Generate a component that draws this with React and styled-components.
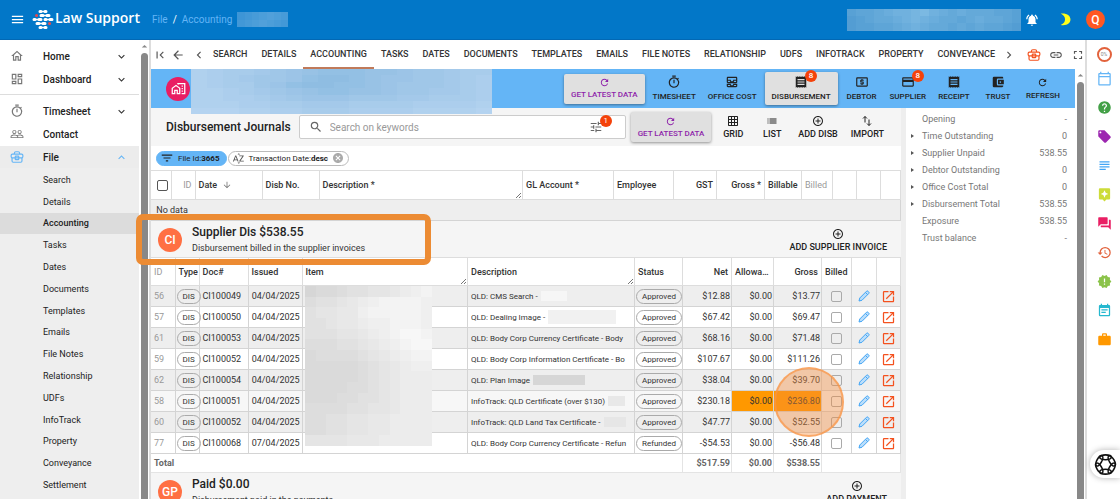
import React from "react";
import styled, { createGlobalStyle } from "styled-components";
import {
  MdAccountBalanceWallet, MdAddCircleOutline, MdArrowBack, MdArrowDownward, MdArrowDropUp, MdAssistant,
  MdCancel, MdChevronLeft, MdChevronRight, MdEventNote, MdFilterList, MdFirstPage, MdFullscreen, MdGridOn,
  MdHelp, MdHistory, MdKeyboardArrowDown, MdKeyboardArrowUp, MdLaunch, MdLink, MdList, MdLocalAtm,
  MdLocalOffer, MdMenu, MdNewReleases, MdNotificationsActive, MdOutlineAllInbox, MdOutlineCalendarToday,
  MdOutlineDashboard, MdOutlineHome, MdOutlineHomeWork, MdOutlineTimer, MdPayment,
  MdPeopleOutline, MdQuestionAnswer, MdReceipt, MdRefresh, MdSearch, MdSortByAlpha, MdSubject, MdTune, MdWork
} from "react-icons/md";

const GlobalStyle = createGlobalStyle`
  * { box-sizing: border-box; }
  body {
    margin: 0;
    font-family: Roboto, "Liberation Sans", sans-serif;
    font-size: 9px;
    color: #222;
    background: #fff;
  }
  button, input { font: inherit; color: inherit; }
  button { border: 0; padding: 0; background: none; cursor: pointer; }
  a { color: inherit; text-decoration: none; }
  ul { list-style: none; margin: 0; padding: 0; }
  h1, h2, p { margin: 0; font-weight: 500; }
  svg { display: block; flex: none; }
`;

const Shell = styled.div`
  height: 100vh;
  display: flex;
  flex-direction: column;
  overflow: hidden;
`;

const TopBar = styled.header`
  flex: none;
  height: 40px;
  display: flex;
  align-items: center;
  padding: 0 15px 0 10px;
  background: #0277c8;
  border-bottom: 1px solid #0268b4;
  color: #fff;
`;

const Brand = styled.a`
  display: flex;
  align-items: center;
  gap: 1px;
  margin-left: 7px;
  font: 600 14px/18px "Open Sans", "Noto Sans", sans-serif;
  span { padding-bottom: 4px; }
`;

const Crumbs = styled.nav`
  display: flex;
  align-items: center;
  gap: 5px;
  margin-left: 12px;
  font-size: 10px;
  a { color: #64b5f6; }
`;

const TopRight = styled.div`
  margin-left: auto;
  display: flex;
  align-items: center;
  button:nth-of-type(1) { margin-left: 4px; }
  button:nth-of-type(2) { margin: 0 15px 0 19px; }
`;

const Avatar = styled.span`
  flex: none;
  display: flex;
  align-items: center;
  justify-content: center;
  width: ${p => p.$size}px;
  height: ${p => p.$size}px;
  border-radius: 50%;
  background: ${p => p.$color || "#ff7043"};
  color: #fff;
  font-size: 12px;
  font-weight: 500;
`;

const Body = styled.div`
  flex: 1;
  min-height: 0;
  display: flex;
`;

const Sidebar = styled.nav`
  flex: none;
  width: 139px;
  display: flex;
  flex-direction: column;
  padding-top: 5px;
`;

const NavItem = styled.a`
  flex: none;
  display: grid;
  grid-template-columns: 33px 1fr 13px;
  align-items: center;
  height: 22px;
  margin-bottom: ${p => (p.$open ? 0 : 1)}px;
  padding: 0 11px 0 10px;
  font-size: 10px;
  font-weight: 500;
  background: ${p => (p.$open ? "#ececec" : "#fff")};
  color: #222;
  svg:first-child { color: ${p => (p.$open ? "#64b5f6" : "#777")}; }
  svg:last-child { color: ${p => (p.$open ? "#64b5f6" : "#333")}; }
`;

const Divider = styled.hr`
  width: 100%;
  margin: 3px 0 5px;
  border: 0;
  border-top: 1px solid #ddd;
`;

const SubMenu = styled.ul`
  flex: 1;
  display: flex;
  flex-direction: column;
  padding: 1px 0 3px;
  background: #eee;
`;

const SubItem = styled.li`
  flex: 1;
  display: flex;
  align-items: center;
  padding-left: 43px;
  background: ${p => (p.$active ? "#dcdcdc" : "none")};
  font-weight: ${p => (p.$active ? 500 : 400)};
`;

const ScrollTrack = styled.div`
  flex: none;
  width: ${p => p.$width}px;
  display: flex;
  flex-direction: column;
  align-items: center;
  background: #fff;
  border-right: 2px solid #ddd;
  color: #888;
  svg { margin: 0 -2px; }
`;

const ScrollThumb = styled.div`
  flex: 1;
  width: 7px;
  margin-bottom: -8px;
  border-radius: 4px;
  background: #888;
`;

const Main = styled.main`
  flex: 1;
  min-width: 0;
  display: flex;
  flex-direction: column;
`;

const TabBar = styled.nav`
  flex: none;
  height: 29px;
  display: flex;
  align-items: center;
  padding: 0 0 0 2px;
  border-right: 2px solid #ddd;
  color: #555;
`;

const BackTools = styled.div`
  display: flex;
  gap: 4px;
  margin-right: 7px;
`;

const Tabs = styled.div`
  flex: 1;
  height: 100%;
  display: flex;
`;

const Tab = styled.a`
  flex: 1 1 auto;
  display: flex;
  align-items: center;
  justify-content: center;
  white-space: nowrap;
  font-weight: 500;
  color: #333;
  border-bottom: 2px solid ${p => (p.$active ? "#c07a5a" : "transparent")};
`;

const TabTools = styled.div`
  display: flex;
  align-items: center;
  gap: 8px;
  margin-left: 11px;
`;

const Scroller = styled.div`
  flex: 1;
  min-height: 0;
  display: flex;
`;

const Page = styled.div`
  flex: 1;
  min-width: 0;
  display: flex;
  flex-direction: column;
`;

const FileBar = styled.div`
  position: relative;
  z-index: 1;
  flex: none;
  height: 39px;
  display: flex;
  align-items: center;
  padding: 0 9px 0 15px;
  background: #64b5f6;
`;

const FileName = styled.div`
  align-self: flex-start;
  margin-left: 1px;
  flex: 0 1 301px;
  height: 39px;
`;

const Actions = styled.div`
  display: flex;
  align-items: center;
  margin-left: auto;
`;

const Action = styled.button`
  display: flex;
  flex-direction: column;
  align-items: center;
  justify-content: center;
  gap: ${p => (p.$latest ? 1 : 2)}px;
  min-width: ${p => (p.$small ? 44 : 38)}px;
  height: ${p => (p.$latest ? 30 : 33)}px;
  margin: 0 ${p => (p.$raised ? 2 : 0)}px;
  padding: 0 ${p => (p.$raised ? 7 : 6)}px;
  white-space: nowrap;
  font-size: ${p => (p.$small ? 8 : 9)}px;
  font-weight: 500;
  line-height: 11px;
  border-radius: 2px;
  color: ${p => (p.$latest ? "#8e24aa" : "#222")};
  background: ${p => (p.$raised ? "#e0e0e0" : "none")};
  box-shadow: ${p => (p.$raised ? "0 1px 3px rgba(0, 0, 0, 0.4)" : "none")};
`;

const IconSlot = styled.span`
  position: relative;
`;

const Badge = styled.span`
  position: absolute;
  top: -5px;
  left: 11px;
  width: 12px;
  height: 12px;
  border-radius: 50%;
  background: #f4420a;
  color: #fff;
  font-size: 8px;
  line-height: 12px;
  text-align: center;
`;

const Columns = styled.div`
  flex: 1;
  min-height: 0;
  display: flex;
`;

const Journal = styled.section`
  flex: 1;
  min-width: 0;
`;

const JournalHead = styled.div`
  height: 38px;
  display: flex;
  align-items: center;
  gap: 1px;
  padding: 0 11px 0 15px;
  background: #f5f5f5;
  h1 { font-size: 12px; margin-right: 7px; white-space: nowrap; }
`;

const SearchBox = styled.label`
  flex: 1;
  min-width: 0;
  height: 24px;
  display: flex;
  align-items: center;
  margin-right: 2px;
  padding: 0 22px 0 9px;
  background: #fff;
  border: 1px solid #ccc;
  border-radius: 2px;
  color: #666;
  input {
    flex: 1;
    min-width: 0;
    margin-left: 7px;
    padding: 0;
    border: 0;
    outline: 0;
    background: none;
    font-size: 10px;
  }
  input::placeholder { color: #999; opacity: 1; }
`;

const Chips = styled.div`
  height: 24px;
  display: flex;
  align-items: center;
  gap: 1px;
  padding-left: 5px;
`;

const Chip = styled.span`
  display: flex;
  align-items: center;
  gap: 4px;
  height: 15px;
  padding: 0 ${p => (p.$filled ? 6 : 4)}px 0 3px;
  border: 1px solid ${p => (p.$filled ? "#64b5f6" : "#bbb")};
  border-radius: 8px;
  background: ${p => (p.$filled ? "#64b5f6" : "#fff")};
  font-size: 8px;
  b { font-weight: 700; }
`;

const Table = styled.table`
  width: 100%;
  table-layout: fixed;
  border-collapse: collapse;
  th {
    position: relative;
    height: ${p => p.$head}px;
    border: solid #ddd;
    border-width: 1px 1px 1px 0;
    background: #fff;
    white-space: nowrap;
    overflow: hidden;
    text-overflow: ellipsis;
  }
  td {
    height: 21px;
    padding: 0 3px;
    border: solid #d4d4d4;
    border-width: 1px 1px 1px 0;
    white-space: nowrap;
  }
  tfoot td {
    height: 19px;
    background: #fff;
    border-color: #e4e4e4;
    font-weight: 700;
    color: #666;
  }
`;

const Row = styled.tr`
  background: ${p => p.$tone};
`;

const HeadCell = styled.th`
  padding: 0 ${p => (p.$align ? 3 : 0)}px 0 3px;
  text-align: ${p => p.$align || "left"};
  color: ${p => (p.$muted ? "#999" : "#333")};
  font-weight: ${p => (p.$muted ? 400 : 500)};
  svg { display: inline-block; vertical-align: middle; }
`;

const Cell = styled.td`
  position: relative;
  text-align: ${p => p.$align || "left"};
  && { padding: 0 ${p => (p.$tight ? 1 : 3)}px; }
  color: ${p => (p.$muted ? "#999" : "#333")};
  background: ${p => (p.$warn ? "#ff9800" : "none")};
`;

const Clip = styled.div`
  display: flex;
  align-items: center;
  gap: 3px;
  overflow: hidden;
  font-size: 8px;
`;

const Smudge = styled.span`
  flex: none;
  width: ${p => p.$w}px;
  height: ${p => p.$h}px;
  background: ${p => p.$color};
`;

const Pill = styled.span`
  display: inline-block;
  height: 15px;
  padding: 0 5px;
  border: 1px solid #aaa;
  border-radius: 8px;
  font-size: 8px;
  line-height: 13px;
  color: #333;
  vertical-align: middle;
`;

const Check = styled.input.attrs({ type: "checkbox" })`
  appearance: none;
  display: block;
  width: ${p => p.$size}px;
  height: ${p => p.$size}px;
  margin: 0 auto;
  border: 1px solid ${p => p.$color};
  border-radius: 2px;
`;

const IconButton = styled.button`
  display: block;
  margin: ${p => (p.$cell ? "0 auto" : 0)};
  color: ${p => p.$color || "inherit"};
`;

const Grip = styled.svg`
  position: absolute;
  right: 0;
  bottom: 0;
`;

const Group = styled.div`
  position: relative;
  height: 36px;
  display: flex;
  align-items: center;
  gap: 10px;
  padding: 2px 8px 0 7px;
  background: #f5f5f5;
  h2 { font-size: 12px; line-height: 17px; }
  p { font-size: 9px; line-height: 15px; font-weight: 400; color: #333; }
  > button { margin-left: auto; }
`;

const Callout = styled.div`
  position: absolute;
  z-index: 5;
  left: -15px;
  top: -7px;
  width: 295px;
  height: 51px;
  border: 6px solid #ec8b33;
  border-radius: 7px;
  pointer-events: none;
`;

const Spotlight = styled.span`
  position: absolute;
  z-index: 4;
  left: 0;
  top: -24px;
  width: 70px;
  height: 70px;
  border: 2px solid rgba(250, 150, 70, 0.7);
  border-radius: 50%;
  background: rgba(245, 140, 60, 0.4);
  pointer-events: none;
`;

const Overlap = styled.div`
  position: relative;
`;

const ItemCover = styled.div`
  position: absolute;
  left: 154px;
  top: 29px;
  width: 127px;
  height: 160px;
`;

const MosaicGrid = styled.div`
  display: grid;
  grid-template-columns: repeat(${p => p.$cols}, 1fr);
  width: ${p => (p.$w ? `${p.$w}px` : "100%")};
  height: ${p => (p.$h ? `${p.$h}px` : "100%")};
`;

const Summary = styled.aside`
  flex: none;
  width: 174px;
  padding: 2px 8px 0 5px;
  border-left: 5px solid #eee;
  color: #777;
`;

const SummaryRow = styled.div`
  display: grid;
  grid-template-columns: 11px 1fr auto;
  align-items: center;
  height: 17px;
`;

const Caret = styled.i`
  border: 2px solid transparent;
  border-left: 3px solid #555;
  width: 0;
  visibility: ${p => (p.$shown ? "visible" : "hidden")};
`;

const Rail = styled.aside`
  flex: none;
  width: 33px;
  display: flex;
  flex-direction: column;
  align-items: center;
  gap: 14px;
  padding: 7px 0 0 1px;
  button:first-child { margin-bottom: -5px; }
`;

const Progress = styled.span`
  display: block;
  width: 15px;
  height: 15px;
  border: 2px solid #e2623c;
  border-radius: 50%;
  color: #888;
  font-size: 5px;
  line-height: 11px;
  text-align: center;
`;

const Assistant = styled.button`
  position: fixed;
  right: 0;
  bottom: 21px;
  width: 30px;
  height: 28px;
  display: flex;
  align-items: center;
  justify-content: center;
  border-radius: 14px 0 0 14px;
  background: #fff;
  box-shadow: 0 0 6px rgba(0, 0, 0, 0.3);
`;

// each digit is the position of the cell between the two colours, 0 to 9
const Mosaic = ({ rows, from, to, w, h }) => (
  <MosaicGrid $cols={rows[0].length} $w={w} $h={h}>
    {rows.join("").split("").map((d, i) => (
      <span key={i} style={{ background: `color-mix(in srgb, ${to} ${Number(d) * 11}%, ${from})` }} />
    ))}
  </MosaicGrid>
);

const nameRows = [
  "1233456788877655433",
  "1234556899876655432",
  "1233568998876555432",
  "1123456788776554432",
  "1122345666555443332",
  "1112233444333322221",
  "0001122333222211110"
];

const itemRows = [
  "011233445678", "233456788887", "344557888887", "334556778887", "333445678998",
  "222334567899", "122223456788", "111112345677", "111112345666", "111122345666",
  "111223345666", "222233445666", "223344556666", "223344556666", "444455566666"
];

const Logo = () => (
  <svg width="22" height="22" viewBox="0 0 22 22" fill="none" strokeWidth="3" strokeLinecap="round">
    <path stroke="#fff" d="M8 2.500h1M13 2.500h1M9 6.500h2M15 6.500h2M2 10.500h1M7 10.500h2M13 10.500h1M18 10.500h2M5 14.500h2M11 14.500h2M8 18.500h1M13 18.500h1" />
    <path stroke="#fff" strokeWidth="1.600" d="M8 2.500h6M9 6.500h8M2 10.500h7M13 10.500h7M5 14.500h8M8 18.500h6" />
    <path stroke="#e5484d" d="M4.500 6.500h.1M17.500 14.500h.1" />
  </svg>
);

const Briefcase = ({ size }) => (
  <svg width={size} height={size} viewBox="0 0 24 24" fill="none" stroke="currentColor" strokeWidth="2">
    <path d="M7.500 7V5.500Q7.500 3 10 3h4q2.500 0 2.500 2.500V7" />
    <rect x="2" y="7" width="20" height="6.500" rx="2" />
    <path d="M3.500 13.500V19q0 2 2 2h13q2 0 2-2v-5.500" />
    <rect x="9" y="10.500" width="6" height="6" rx="1" />
  </svg>
);

const Pencil = () => (
  <svg width="12" height="12" viewBox="0 0 24 24" fill="#bbdefb" stroke="#42a5f5" strokeWidth="2">
    <path d="M2 22l1.500-6L17 2.500q1.500-1.500 3 0l1.500 1.500q1.500 1.500 0 3L8 20.500zM15 5l4.500 4.500" />
  </svg>
);

const Moon = () => (
  <svg width="13" height="13" viewBox="0 0 24 24" fill="#ffff1a">
    <path d="M5 1c12-1 18 4 18 11S16 24 5 22c6-3 8-6 8-10.500S10 4 5 1z" />
  </svg>
);

const ImportArrows = () => (
  <svg width="12" height="12" viewBox="0 0 24 24" fill="none" stroke="currentColor" strokeWidth="2">
    <path d="M8 15V3M4 7l4-4 4 4M16 9v12M12 17l4 4 4-4" />
  </svg>
);

const Knot = () => (
  <svg width="23" height="23" viewBox="0 0 24 24" fill="none" stroke="#111" strokeWidth="1.700">
    {[0, 60, 120, 180, 240, 300].map(a => (
      <ellipse key={a} cx="12" cy="4.500" rx="6" ry="2.500" transform={`rotate(${a} 12 12)`} />
    ))}
  </svg>
);

const ResizeGrip = () => (
  <Grip width="7" height="7" viewBox="0 0 7 7" stroke="#777">
    <path d="M1 6l5-5M4 6l2-2" />
  </Grip>
);

const subItems = [
  "Search", "Details", "Accounting", "Tasks", "Dates", "Documents", "Templates", "Emails",
  "File Notes", "Relationship", "UDFs", "InfoTrack", "Property", "Conveyance", "Settlement"
];

const tabs = [
  "SEARCH", "DETAILS", "ACCOUNTING", "TASKS", "DATES", "DOCUMENTS", "TEMPLATES", "EMAILS",
  "FILE NOTES", "RELATIONSHIP", "UDFS", "INFOTRACK", "PROPERTY", "CONVEYANCE"
];

const fileActions = [
  { label: "TIMESHEET", Icon: MdOutlineTimer },
  { label: "OFFICE COST", Icon: MdOutlineAllInbox },
  { label: "DISBURSEMENT", Icon: MdReceipt, badge: 8, raised: true },
  { label: "DEBTOR", Icon: MdLocalAtm },
  { label: "SUPPLIER", Icon: MdPayment, badge: 8 },
  { label: "RECEIPT", Icon: MdReceipt },
  { label: "TRUST", Icon: MdAccountBalanceWallet }
];

const invoices = [
  { id: 56, doc: "CI100049", date: "04/04/2025", text: "QLD: CMS Search -", smudge: [26, 10, "#f6f6f6"], net: "$12.88", gross: "$13.77", tone: "#eee" },
  { id: 57, doc: "CI100050", date: "04/04/2025", text: "QLD: Dealing Image -", smudge: [68, 14, "#f1f1f1"], net: "$67.42", gross: "$69.47", tone: "#fff" },
  { id: 61, doc: "CI100053", date: "04/04/2025", text: "QLD: Body Corp Currency Certificate - Body", net: "$68.16", gross: "$71.48", tone: "#eee" },
  { id: 59, doc: "CI100052", date: "04/04/2025", text: "QLD: Body Corp Information Certificate - Bo", net: "$107.67", gross: "$111.26", tone: "#fff" },
  { id: 62, doc: "CI100054", date: "04/04/2025", text: "QLD: Plan Image", smudge: [52, 10, "#d6d6d6"], net: "$38.04", gross: "$39.70", tone: "#eee" },
  { id: 58, doc: "CI100051", date: "04/04/2025", text: "InfoTrack: QLD Certificate (over $130)", smudge: [17, 10, "#e8e8e8"], net: "$230.18", gross: "$236.80", tone: "#f7f7f7", warn: true },
  { id: 60, doc: "CI100052", date: "04/04/2025", text: "InfoTrack: QLD Land Tax Certificate -", smudge: [22, 10, "#e6e6e6"], net: "$47.77", gross: "$52.55", tone: "#eee" },
  { id: 77, doc: "CI100068", date: "07/04/2025", text: "QLD: Body Corp Currency Certificate - Refun", net: "-$54.53", gross: "-$56.48", tone: "#fff", status: "Refunded" }
];

const summary = [
  ["Opening", "-", false], ["Time Outstanding", "0", true], ["Supplier Unpaid", "538.55", true],
  ["Debtor Outstanding", "0", true], ["Office Cost Total", "0", true], ["Disbursement Total", "538.55", true],
  ["Exposure", "538.55", false], ["Trust balance", "-", false]
];

const railIcons = [
  ["Calendar", MdOutlineCalendarToday, "#64b5f6"], ["Help", MdHelp, "#43a047"], ["Tags", MdLocalOffer, "#9c27b0"],
  ["Notes", MdSubject, "#42a5f5"], ["Suggestions", MdAssistant, "#cddc39"], ["Messages", MdQuestionAnswer, "#e91e63"],
  ["History", MdHistory, "#e2623c"], ["Alerts", MdNewReleases, "#8bc34a"], ["Events", MdEventNote, "#26b8cf"],
  ["Matters", MdWork, "#ff9800"]
];

const Cols = ({ widths }) => (
  <colgroup>
    {widths.map((w, i) => <col key={i} style={w ? { width: w } : undefined} />)}
  </colgroup>
);

const SideNav = () => (
  <Sidebar>
    <NavItem href="#home"><MdOutlineHome size={14} /><span>Home</span><MdKeyboardArrowDown size={13} /></NavItem>
    <NavItem href="#dashboard"><MdOutlineDashboard size={14} /><span>Dashboard</span><MdKeyboardArrowDown size={13} /></NavItem>
    <Divider />
    <NavItem href="#timesheet"><MdOutlineTimer size={14} /><span>Timesheet</span><MdKeyboardArrowDown size={13} /></NavItem>
    <NavItem href="#contact"><MdPeopleOutline size={14} /><span>Contact</span></NavItem>
    <NavItem href="#file" $open><Briefcase size={14} /><span>File</span><MdKeyboardArrowUp size={13} /></NavItem>
    <SubMenu>
      {subItems.map(name => (
        <SubItem key={name} $active={name === "Accounting"}><a href="#file">{name}</a></SubItem>
      ))}
    </SubMenu>
  </Sidebar>
);

const DisbursementTable = () => (
  <Table $head={29}>
    <Cols widths={[20, 24, 67, 57, 0, 91, 60, 43, 48, 37, 31, 24, 24, 20]} />
    <thead>
      <tr>
        <HeadCell><Check $size={11} $color="#555" aria-label="Select all" /></HeadCell>
        <HeadCell $align="right" $muted>ID</HeadCell>
        <HeadCell>Date &nbsp;<MdArrowDownward size={10} color="#777" /></HeadCell>
        <HeadCell>Disb No.</HeadCell>
        <HeadCell>Description *<ResizeGrip /></HeadCell>
        <HeadCell>GL Account *</HeadCell>
        <HeadCell>Employee</HeadCell>
        <HeadCell $align="right">GST</HeadCell>
        <HeadCell $align="right">Gross *</HeadCell>
        <HeadCell>Billable</HeadCell>
        <HeadCell $muted>Billed</HeadCell>
        <HeadCell /><HeadCell /><HeadCell />
      </tr>
    </thead>
    <tbody>
      <Row $tone="#eee"><Cell colSpan={14}>&nbsp;No data</Cell></Row>
    </tbody>
  </Table>
);

const InvoiceTable = () => (
  <Overlap>
    <Table $head={28}>
      <Cols widths={[24, 24, 49, 54, 0, 167, 48, 49, 42, 48, 30, 25, 24]} />
      <thead>
        <tr>
          <HeadCell $muted>ID</HeadCell>
          <HeadCell>Type</HeadCell>
          <HeadCell>Doc#</HeadCell>
          <HeadCell>Issued</HeadCell>
          <HeadCell>Item<ResizeGrip /></HeadCell>
          <HeadCell>Description<ResizeGrip /></HeadCell>
          <HeadCell>Status</HeadCell>
          <HeadCell $align="right">Net</HeadCell>
          <HeadCell>Allowan...</HeadCell>
          <HeadCell $align="right">Gross</HeadCell>
          <HeadCell>Billed</HeadCell>
          <HeadCell /><HeadCell />
        </tr>
      </thead>
      <tbody>
        {invoices.map(inv => (
          <Row key={inv.id} $tone={inv.tone}>
            <Cell $muted>{inv.id}</Cell>
            <Cell $tight><Pill>DIS</Pill></Cell>
            <Cell>{inv.doc}</Cell>
            <Cell $tight>&nbsp;{inv.date}</Cell>
            <Cell />
            <Cell>
              <Clip>
                {inv.text}
                {inv.smudge && <Smudge $w={inv.smudge[0]} $h={inv.smudge[1]} $color={inv.smudge[2]} />}
              </Clip>
            </Cell>
            <Cell $tight><Pill>{inv.status || "Approved"}</Pill></Cell>
            <Cell $align="right" $tight>{inv.net}</Cell>
            <Cell $align="right" $tight $warn={inv.warn}>$0.00</Cell>
            <Cell $align="right" $tight $warn={inv.warn}>
              {inv.gross}
              {inv.warn && <Spotlight />}
            </Cell>
            <Cell><Check $size={11} $color="#aaa" aria-label={`Billed ${inv.id}`} /></Cell>
            <Cell><IconButton $cell aria-label="Edit"><Pencil /></IconButton></Cell>
            <Cell><IconButton $cell $color="#f4511e" aria-label="Open"><MdLaunch size={15} /></IconButton></Cell>
          </Row>
        ))}
      </tbody>
      <tfoot>
        <tr>
          <td colSpan={7}>Total</td>
          <Cell $align="right" $tight>$517.59</Cell>
          <Cell $align="right" $tight>$0.00</Cell>
          <Cell $align="right" $tight>$538.55</Cell>
          <td colSpan={3} />
        </tr>
      </tfoot>
    </Table>
    <ItemCover><Mosaic rows={itemRows} from="#d6d6d6" to="#f7f7f7" /></ItemCover>
  </Overlap>
);

const App = () => (
  <Shell>
    <GlobalStyle />
    <TopBar>
      <IconButton aria-label="Menu"><MdMenu size={15} /></IconButton>
      <Brand href="#home"><Logo /><span>Law Support</span></Brand>
      <Crumbs>
        <a href="#file">File</a> / <a href="#accounting">Accounting</a>
        <Mosaic rows={["0123432", "1234321"]} from="#3d95d6" to="#6aafe0" w={51} h={15} />
      </Crumbs>
      <TopRight>
        <Mosaic rows={["3445677897656555443", "2345567876554565543", "2334456765545454432"]} from="#4795cf" to="#7cb9e2" w={174} h={22} />
        <IconButton aria-label="Notifications"><MdNotificationsActive size={14} /></IconButton>
        <IconButton aria-label="Dark mode"><Moon /></IconButton>
        <Avatar $size={19} $color="#ff5722">Q</Avatar>
      </TopRight>
    </TopBar>
    <Body>
      <SideNav />
      <ScrollTrack $width={12}><MdArrowDropUp size={13} /><ScrollThumb /></ScrollTrack>
      <Main>
        <TabBar>
          <BackTools>
            <IconButton aria-label="First"><MdFirstPage size={14} /></IconButton>
            <IconButton aria-label="Back"><MdArrowBack size={14} /></IconButton>
          </BackTools>
          <IconButton aria-label="Previous"><MdChevronLeft size={14} /></IconButton>
          <Tabs>
            {tabs.map(name => (
              <Tab key={name} href="#tab" $active={name === "ACCOUNTING"}>{name}</Tab>
            ))}
          </Tabs>
          <IconButton aria-label="Next"><MdChevronRight size={14} /></IconButton>
          <TabTools>
            <IconButton $color="#f4511e" aria-label="File"><Briefcase size={14} /></IconButton>
            <IconButton aria-label="Copy link"><MdLink size={14} /></IconButton>
            <IconButton aria-label="Full screen"><MdFullscreen size={14} /></IconButton>
          </TabTools>
        </TabBar>
        <Scroller>
          <Page>
            <FileBar>
              <Avatar $size={24} $color="#e91e63"><MdOutlineHomeWork size={15} /></Avatar>
              <FileName><Mosaic rows={nameRows} from="#b4d3f0" to="#8fbde2" h={45} /></FileName>
              <Actions>
                <Action $raised $latest $small><MdRefresh size={11} />GET LATEST DATA</Action>
                {fileActions.map(({ label, Icon, badge, raised }) => (
                  <Action key={label} $small $raised={raised}>
                    <IconSlot><Icon size={14} />{badge && <Badge>{badge}</Badge>}</IconSlot>
                    {label}
                  </Action>
                ))}
                <Action $small><MdRefresh size={11} />REFRESH</Action>
              </Actions>
            </FileBar>
            <Columns>
              <Journal>
                <JournalHead>
                  <h1>Disbursement Journals</h1>
                  <SearchBox>
                    <MdSearch size={14} />
                    <input placeholder="Search on keywords" aria-label="Search on keywords" />
                    <IconSlot><MdTune size={14} /><Badge>1</Badge></IconSlot>
                  </SearchBox>
                  <Action $raised $latest $small><MdRefresh size={11} />GET LATEST DATA</Action>
                  <Action><MdGridOn size={12} />GRID</Action>
                  <Action><MdList size={12} />LIST</Action>
                  <Action><MdAddCircleOutline size={12} />ADD DISB</Action>
                  <Action><ImportArrows />IMPORT</Action>
                </JournalHead>
                <Chips>
                  <Chip $filled><MdFilterList size={14} /><span>File Id:<b>3665</b></span></Chip>
                  <Chip><MdSortByAlpha size={13} color="#555" /><span>Transaction Date:<b>desc</b></span><MdCancel size={12} color="#aaa" /></Chip>
                </Chips>
                <DisbursementTable />
                <Group>
                  <Avatar $size={24}>CI</Avatar>
                  <div>
                    <h2>Supplier Dis $538.55</h2>
                    <p>Disbursement billed in the supplier invoices</p>
                  </div>
                  <Action><MdAddCircleOutline size={12} />ADD SUPPLIER INVOICE</Action>
                  <Callout />
                </Group>
                <InvoiceTable />
                <Group>
                  <Avatar $size={24}>GP</Avatar>
                  <div>
                    <h2>Paid $0.00</h2>
                    <p>Disbursement paid in the payments</p>
                  </div>
                  <Action><MdAddCircleOutline size={12} />ADD PAYMENT</Action>
                </Group>
              </Journal>
              <Summary>
                {summary.map(([label, value, opens]) => (
                  <SummaryRow key={label}>
                    <Caret $shown={opens} /><span>{label}</span><span>{value}</span>
                  </SummaryRow>
                ))}
              </Summary>
            </Columns>
          </Page>
          <ScrollTrack $width={12}><MdArrowDropUp size={13} /><ScrollThumb /></ScrollTrack>
        </Scroller>
      </Main>
      <Rail>
        <IconButton aria-label="Progress"><Progress>0%</Progress></IconButton>
        {railIcons.map(([label, Icon, color]) => (
          <IconButton key={label} $color={color} aria-label={label}><Icon size={15} /></IconButton>
        ))}
      </Rail>
    </Body>
    <Assistant aria-label="Assistant"><Knot /></Assistant>
  </Shell>
);

export default App;
